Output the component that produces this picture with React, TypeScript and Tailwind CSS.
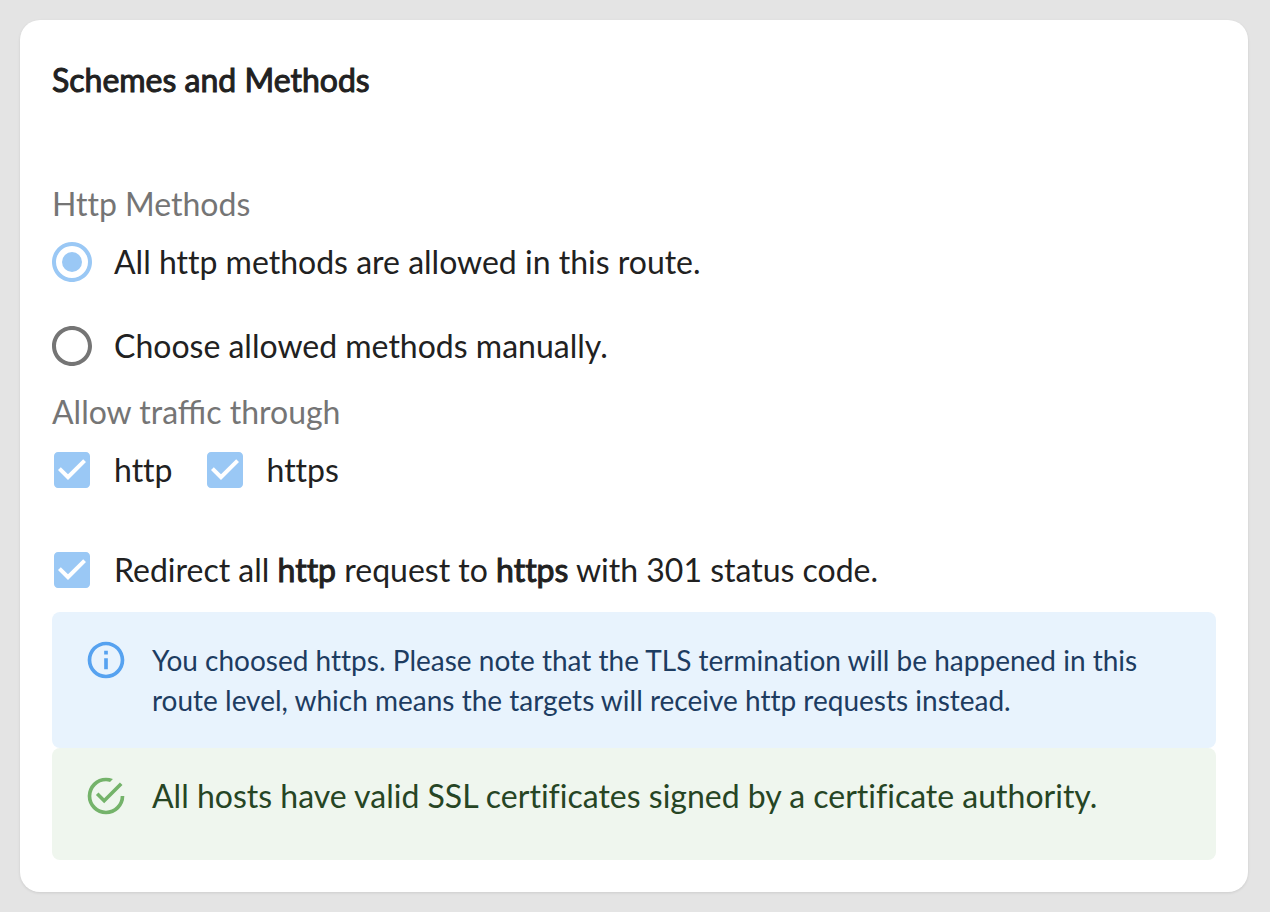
import { useState } from "react";

function Radio({ label, checked, onChange }: { label: string; checked: boolean; onChange: () => void }) {
  return (
    <label className="flex h-21 cursor-pointer items-center gap-[22px]">
      <input type="radio" name="methods" className="peer sr-only" checked={checked} onChange={onChange} />
      <svg viewBox="2 2 20 20" className={checked ? "size-10 text-[#9ac8f5]" : "size-10 text-[#757575]"} fill="currentColor" aria-hidden="true">
        <path d="M12 2C6.48 2 2 6.48 2 12s4.48 10 10 10 10-4.48 10-10S17.52 2 12 2zm0 18c-4.42 0-8-3.58-8-8s3.58-8 8-8 8 3.58 8 8-3.58 8-8 8z" />
        {checked && <circle cx="12" cy="12" r="5" />}
      </svg>
      <span>{label}</span>
    </label>
  );
}

function Check({ children }: { children: React.ReactNode }) {
  const [on, setOn] = useState(true);
  return (
    <label className="flex h-21 cursor-pointer items-center gap-6 pl-[2px]">
      <input type="checkbox" className="sr-only" checked={on} onChange={() => setOn(!on)} />
      <svg viewBox="3 3 18 18" className={on ? "size-9 text-[#9ac8f5]" : "size-9 text-[#757575]"} fill="currentColor" aria-hidden="true">
        {on ? (
          <path d="M19 3H5c-1.11 0-2 .9-2 2v14c0 1.1.89 2 2 2h14c1.11 0 2-.9 2-2V5c0-1.1-.89-2-2-2zm-9 14l-5-5 1.41-1.41L10 14.17l7.59-7.59L19 8l-9 9z" />
        ) : (
          <path d="M19 5v14H5V5h14m0-2H5c-1.1 0-2 .9-2 2v14c0 1.1.9 2 2 2h14c1.1 0 2-.9 2-2V5c0-1.1-.9-2-2-2z" />
        )}
      </svg>
      <span>{children}</span>
    </label>
  );
}

function Strong({ children }: { children: React.ReactNode }) {
  return <strong className="font-normal [-webkit-text-stroke:1px]">{children}</strong>;
}

export default function App() {
  const [all, setAll] = useState(true);
  return (
    <main className="min-h-screen bg-[#e4e4e4] py-5 pr-[22px] pl-5 font-['Lato',sans-serif] text-[32px] leading-12 text-[#212121] [font-variant-ligatures:none]">
      <section className="rounded-[20px] bg-white p-8 shadow-[0_1px_3px_rgba(0,0,0,0.1)]">
        <h1 className="pt-1">
          <Strong>Schemes and Methods</Strong>
        </h1>
        <fieldset className="mt-[76px]">
          <legend className="h-10 leading-12 text-[#757575]">Http Methods</legend>
          <Radio label="All http methods are allowed in this route." checked={all} onChange={() => setAll(true)} />
          <Radio label="Choose allowed methods manually." checked={!all} onChange={() => setAll(false)} />
        </fieldset>
        <fieldset>
          <legend className="h-10 leading-12 text-[#757575] [font-variant-ligatures:normal]">Allow traffic through</legend>
          <div className="flex gap-8">
            <Check>http</Check>
            <Check>https</Check>
          </div>
        </fieldset>
        <div className="mt-4">
          <Check>
            Redirect all <Strong>http</Strong> request to <Strong>https</Strong> with 301 status code.
          </Check>
        </div>
        <div className="flex gap-6 rounded-lg bg-[#e8f3fd] px-8 pt-[26px] pb-7 text-[28px] leading-10 text-[#1d3c61]">
          <svg viewBox="0 0 24 24" className="size-11 shrink-0 text-[#56a2f0]" fill="currentColor" aria-hidden="true">
            <path d="M11 7h2v2h-2zm0 4h2v6h-2zm1-9C6.48 2 2 6.48 2 12s4.48 10 10 10 10-4.48 10-10S17.52 2 12 2zm0 18c-4.41 0-8-3.59-8-8s3.59-8 8-8 8 3.59 8 8-3.59 8-8 8z" />
          </svg>
          <p className="pt-0.5">You choosed https. Please note that the TLS termination will be happened in this route level, which means the targets will receive http requests instead.</p>
        </div>
        <div className="flex gap-6 rounded-lg bg-[#eff6ee] px-8 pt-[26px] pb-[42px] leading-10 text-[#264524]">
          <svg viewBox="0 0 24 24" className="size-11 shrink-0 text-[#74b36a]" fill="currentColor" aria-hidden="true">
            <path d="M20 12A8 8 0 0 1 12 20A8 8 0 0 1 4 12A8 8 0 0 1 12 4C12.76 4 13.5 4.11 14.2 4.31L15.77 2.74A10 10 0 0 0 12 2A10 10 0 0 0 2 12A10 10 0 0 0 12 22A10 10 0 0 0 22 12M7.91 10.08L6.5 11.5L11 16L21 6L19.59 4.58L11 13.17L7.91 10.08Z" />
          </svg>
          <p className="pt-0.5">All hosts have valid SSL certificates signed by a certificate authority.</p>
        </div>
      </section>
    </main>
  );
}
